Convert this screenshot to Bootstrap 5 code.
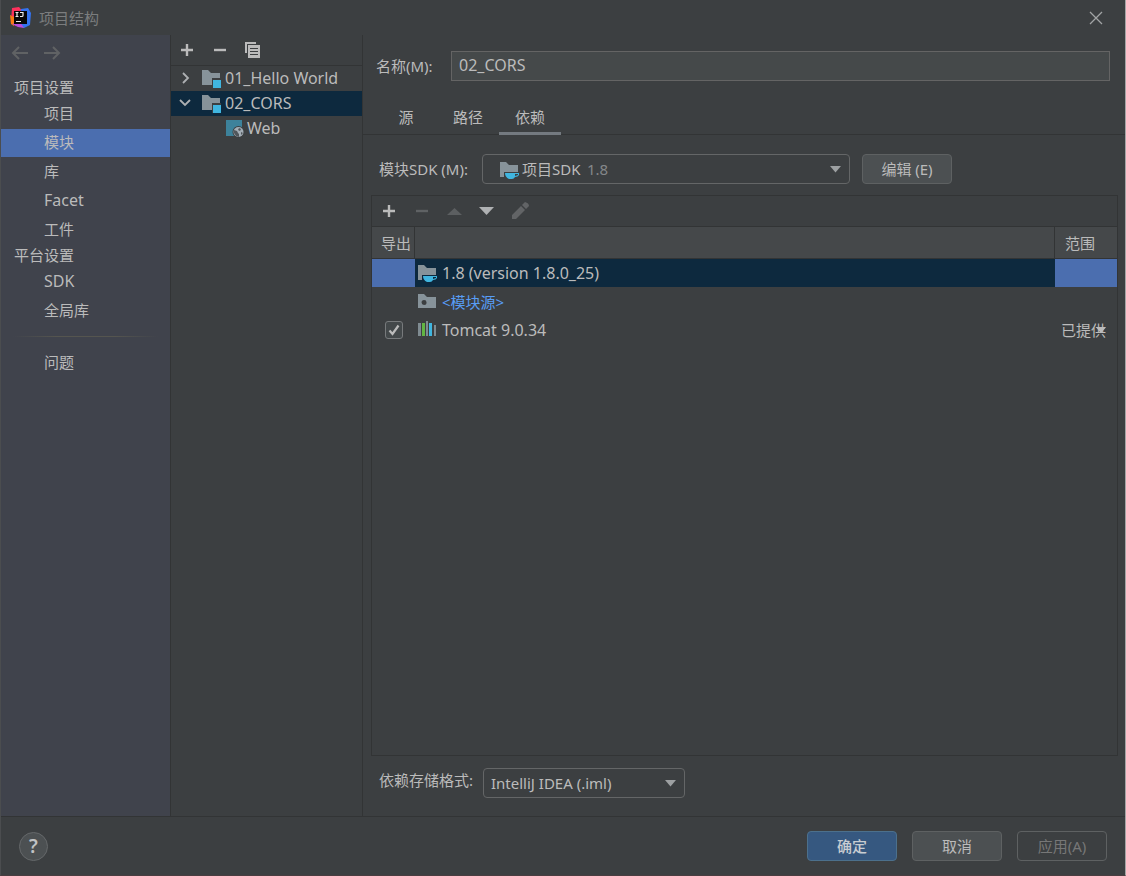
<!DOCTYPE html>
<html lang="zh-CN" data-bs-theme="dark">
<head>
<meta charset="utf-8">
<meta name="viewport" content="width=device-width, initial-scale=1">
<title>项目结构</title>
<link href="https://cdn.jsdelivr.net/npm/bootstrap@5.3.0/dist/css/bootstrap.min.css" rel="stylesheet">
<style>
:root { --bg:#3c3f41; --side:#40434c; --line:#323435; --txt:#bbbbbb; --dim:#7b7d7e; --edge:#5e6162; --sel:#0d293e; --blue:#4b6eaf; }
body { font-family:"Noto Sans","Noto Sans CJK SC",sans-serif; font-size:15px; line-height:20px; color:var(--txt); background:var(--bg); }
svg { display:block; flex:none; }
.window { border-left:1px solid #4b4d4f; border-right:1px solid #a5a5a5; border-bottom:1px solid #4a3d40; }
.titlebar { height:35px; padding:0 22px 0 9px; color:var(--dim); }
.plain { border:0; padding:0; background:none; color:inherit; }
.latin { font-size:16px; }
.sidebar { width:170px; background:var(--side); border-right:1px solid var(--line); }
.history { height:41px; padding:0 10px 5px; gap:14px; }
.side-head { height:23px; line-height:23px; padding-left:13px; margin:0; font-size:15px; font-weight:400; color:var(--txt); }
.side-link { display:block; height:28px; line-height:27px; margin-top:1px; padding-left:43px; color:var(--txt); text-decoration:none; }
.side-link.active { background:var(--blue); }
.side-rule { height:1px; margin:11px 12px 12px; background:linear-gradient(90deg,transparent,#55554f 30%,#55554f 70%,transparent); }
.tree { width:192px; border-right:1px solid var(--line); }
.tree-tools { height:31px; padding:0 7px; gap:15px; border-bottom:1px solid var(--line); }
.tree-row { height:25px; padding:0 0 2px 6px; cursor:default; white-space:nowrap; }
.tree-row.active { background:var(--sel); }
.content { min-width:0; }
.name-row { padding:16px 15px 0 13px; }
.name-label { width:75px; }
.name-input { height:30px; padding:0 7px 2px; border:1px solid #646464; border-radius:0; background:#45494a; color:var(--txt); }
.tabs { height:54px; padding-left:12px; border-bottom:1px solid var(--line); align-items:flex-end; }
.tab { width:62px; height:35px; padding:1px 0 0; margin-bottom:-1px; border:0; border-bottom:3px solid transparent; background:none; color:var(--txt); }
.tab.active { border-color:#747a80; }
.sdk-row { padding:19px 15px 11px 16px; gap:12px; }
.sdk-label { width:91px; white-space:nowrap; }
.sdk-box { flex:0 1 368px; }
.combo { height:30px; width:100%; padding:0 32px 0 7px; border:1px solid #646667; border-radius:4px; color:var(--txt); font-size:15px; background-color:var(--bg);
 background-image:url("data:image/svg+xml,%3Csvg xmlns='http://www.w3.org/2000/svg' viewBox='0 0 11 7'%3E%3Cpath fill='%239da0a2' d='M0 0h11L5.500 6.500z'/%3E%3C/svg%3E"); background-size:11px 7px; background-position:right 8px center; }
.combo.sdk { padding-left:39px; }
.sdk-icon { left:17px; top:6px; pointer-events:none; }
.sdk-version { left:105px; top:5px; color:#84878a; pointer-events:none; }
.push { width:90px; height:30px; padding:0; border:1px solid var(--edge); border-radius:4px; background:#4c5052; color:var(--txt); font-size:15px; line-height:20px; }
.push.primary { background:#365880; border-color:#4c708c; font-weight:500; color:#c8cdd2; }
.push:disabled { background:transparent; color:#777; border-color:var(--edge); opacity:1; }
.panel { margin:0 7px 0 8px; border:1px solid var(--line); }
.panel-tools { height:31px; padding:0 8px; gap:15px; border-bottom:1px solid var(--line); }
.deps { width:100%; table-layout:fixed; border-collapse:separate; border-spacing:0; }
.deps .c-export { width:43px; }
.deps .c-scope { width:62px; }
.deps th { height:32px; padding:0; font-weight:400; background:#45484a; border-bottom:1px solid var(--line); box-shadow:inset -1px 0 var(--line); vertical-align:middle; white-space:nowrap; }
.deps th:last-child { box-shadow:none; padding-left:10px; }
.deps th:first-child { padding-left:9px; }
.deps td { height:28px; padding:0; }
.deps tbody tr + tr td { padding-top:1px; }
.deps tr.active td { background:var(--blue); }
.deps tr.active td.dep { background:var(--sel); }
.dep > div { gap:5px; padding-left:2px; }
.src { color:#589df6; }
.tick { appearance:none; display:block; width:18px; height:18px; margin:0 0 0 13px; border:1px solid #777a7c; border-radius:3px; background:#43484a; }
.tick:checked { background-image:url("data:image/svg+xml,%3Csvg xmlns='http://www.w3.org/2000/svg' viewBox='0 0 16 16'%3E%3Cpath fill='none' stroke='%23bbbbbb' stroke-width='2.200' d='M3.500 8.500 6.500 12 12.500 3.500'/%3E%3C/svg%3E"); }
.scope { appearance:none; display:block; width:100%; height:28px; padding:0 0 0 6px; border:0; color:var(--txt); font-size:15px; background:url("data:image/svg+xml,%3Csvg xmlns='http://www.w3.org/2000/svg' viewBox='0 0 11 7'%3E%3Cpath fill='%23bbbbbb' d='M0 0h11L5.500 6.500z'/%3E%3C/svg%3E") no-repeat right 11px center / 10px 7px; }
.format-row { padding:12px 15px 18px 16px; }
.format-label { width:104px; height:24px; line-height:24px; }
.format-box { width:202px; }
.actions { height:59px; padding:0 18px; gap:15px; border-top:1px solid var(--line); }
.help { width:29px; height:29px; padding:0; border:1px solid #65686a; border-radius:50%; background:#4c5052; color:#c0c2c4; font-size:19px; font-weight:600; line-height:26px; }
</style>
</head>
<body>
<svg width="0" height="0" class="position-absolute" aria-hidden="true">
 <defs>
  <symbol id="plus" viewBox="0 0 18 18"><path d="M9 3v12M3 9h12" stroke="currentColor" stroke-width="2.400"/></symbol>
  <symbol id="minus" viewBox="0 0 18 18"><path d="M3 9h12" stroke="currentColor" stroke-width="2.400"/></symbol>
  <symbol id="folder" viewBox="0 0 20 20"><path d="M1 2h6l3 3h9v12H1z" fill="#87939a"/></symbol>
  <symbol id="module" viewBox="0 0 20 20"><use href="#folder"/><path d="M11 10h9v10h-9z" fill="#3c3f41"/><path d="M12 12h8v8h-8z" fill="#40b6e0"/></symbol>
  <symbol id="sdk" viewBox="0 0 20 20"><path d="M1 2h6l3 3h9v7H5v5H1z" fill="#87939a"/><path fill="#40b6e0" fill-rule="evenodd" d="M6 13h14v2q-1 2-4 2-1 2-3 2H10q-4-2-4-6zm10 1v2l3-1v-1z"/></symbol>
 </defs>
</svg>
<div class="window d-flex flex-column min-vh-100">
 <header class="titlebar d-flex align-items-center">
  <svg width="21" height="21" viewBox="0 0 21 21"><path d="M2 1 9 0l4 5-7 14-5-5z" fill="#fe315d"/><path d="M0 8l6 3-2 8-3-2z" fill="#f97a12"/><path d="M11 2l7-1 3 5-1 12-6 3-6-3z" fill="#3474f0"/><path d="M2 17l8-2 4 6-6-1z" fill="#b84bdc"/><path d="M4 4h13v13H4z" fill="#080808"/><path d="M5.500 5.500h3M7 5.500v4M5.500 9.500h3M10 5.500h3v3q0 1-1 1h-2M6 14.500h5" fill="none" stroke="#eee" stroke-width="1.200"/></svg>
  <span class="ms-2">项目结构</span>
  <button class="plain ms-auto" aria-label="关闭"><svg width="14" height="14" viewBox="0 0 14 14"><path d="M1 1l12 12M13 1 1 13" stroke="#a2a4a5" stroke-width="1.300"/></svg></button>
 </header>
 <div class="d-flex flex-grow-1">
  <nav class="sidebar flex-shrink-0" aria-label="设置">
   <div class="history d-flex align-items-center">
    <button class="plain" aria-label="后退"><svg width="18" height="16" viewBox="0 0 18 16"><path d="M17 8H2M8 2 2 8l6 6" fill="none" stroke="#606264" stroke-width="2"/></svg></button>
    <button class="plain" aria-label="前进"><svg width="18" height="16" viewBox="0 0 18 16"><path d="M1 8h15M10 2l6 6-6 6" fill="none" stroke="#606264" stroke-width="2"/></svg></button>
   </div>
   <h2 class="side-head">项目设置</h2>
   <a class="side-link" href="#">项目</a>
   <a class="side-link active" href="#" aria-current="page">模块</a>
   <a class="side-link" href="#">库</a>
   <a class="side-link latin" href="#">Facet</a>
   <a class="side-link" href="#">工件</a>
   <h2 class="side-head">平台设置</h2>
   <a class="side-link latin" href="#">SDK</a>
   <a class="side-link" href="#">全局库</a>
   <div class="side-rule"></div>
   <a class="side-link" href="#">问题</a>
  </nav>
  <section class="tree flex-shrink-0">
   <div class="tree-tools d-flex align-items-center">
    <button class="plain" aria-label="添加"><svg width="18" height="18"><use href="#plus"/></svg></button>
    <button class="plain" aria-label="移除"><svg width="18" height="18"><use href="#minus"/></svg></button>
    <button class="plain" aria-label="复制"><svg width="18" height="18" viewBox="0 0 18 18"><path d="M2 12V2h10" fill="none" stroke="currentColor" stroke-width="2"/><path fill="currentColor" fill-rule="evenodd" d="M4 4h12v13H4zm2 3v1h8V7zm0 3v1h8v-1zm0 3v1h8v-1z"/></svg></button>
   </div>
   <div class="tree-row latin d-flex align-items-center"><svg width="16" height="16" viewBox="0 0 16 16"><path d="M6 3l5 5-5 5" fill="none" stroke="#adb0b2" stroke-width="1.800"/></svg><svg class="ms-2 me-1" width="20" height="20"><use href="#module"/></svg><span>01_Hello World</span></div>
   <div class="tree-row latin active d-flex align-items-center"><svg width="16" height="16" viewBox="0 0 16 16"><path d="M3 5l5 5 5-5" fill="none" stroke="#adb0b2" stroke-width="1.800"/></svg><svg class="ms-2 me-1" width="20" height="20"><use href="#module"/></svg><span>02_CORS</span></div>
   <div class="tree-row latin d-flex align-items-center"><svg class="ms-5" width="22" height="20" viewBox="0 0 22 20"><path d="M1 2h16v16H1z" fill="#3d829b"/><circle cx="13.500" cy="14" r="6" fill="#3c3f41"/><circle cx="13.500" cy="14" r="5" fill="#a3adb5"/><path d="M9 12l3 1 1 2 1 1v3l-3-1-2-3zm5-2-1 2 2 1 1-2zm2 4 2 1-2 2z" fill="#50565b"/></svg><span>Web</span></div>
  </section>
  <main class="content d-flex flex-column flex-grow-1">
   <div class="name-row d-flex align-items-center">
    <label class="name-label flex-shrink-0" for="name">名称(M):</label>
    <input id="name" class="name-input latin flex-grow-1" type="text" value="02_CORS">
   </div>
   <div class="tabs d-flex" role="tablist">
    <button class="tab" role="tab">源</button>
    <button class="tab" role="tab">路径</button>
    <button class="tab active" role="tab" aria-selected="true">依赖</button>
   </div>
   <div class="sdk-row d-flex align-items-center">
    <label class="sdk-label flex-shrink-0" for="sdk-select">模块SDK (M):</label>
    <div class="sdk-box position-relative">
     <select id="sdk-select" class="form-select combo sdk"><option>项目SDK</option></select>
     <svg class="sdk-icon position-absolute" width="20" height="20"><use href="#sdk"/></svg>
     <span class="sdk-version position-absolute">1.8</span>
    </div>
    <button class="push flex-shrink-0">编辑 (E)</button>
   </div>
   <section class="panel flex-grow-1">
    <div class="panel-tools d-flex align-items-center">
     <button class="plain" aria-label="添加"><svg width="18" height="18"><use href="#plus"/></svg></button>
     <button class="plain" aria-label="移除"><svg width="18" height="18" color="#5f6264"><use href="#minus"/></svg></button>
     <button class="plain" aria-label="上移"><svg width="18" height="18" viewBox="0 0 18 18"><path d="M1 13h15L8.500 6z" fill="#5c5f61"/></svg></button>
     <button class="plain" aria-label="下移"><svg width="18" height="18" viewBox="0 0 18 18"><path d="M0 5h15L7.500 13z" fill="#afb1b3"/></svg></button>
     <button class="plain" aria-label="编辑"><svg width="18" height="18" viewBox="0 0 18 18"><path d="M0 17v-4L9 4l4 4L4 17zM10 3l3-3q4 1 4 4l-3 3z" fill="#626466"/></svg></button>
    </div>
    <table class="deps">
     <colgroup><col class="c-export"><col><col class="c-scope"></colgroup>
     <thead><tr><th scope="col">导出</th><th scope="col" aria-label="依赖项"></th><th scope="col">范围</th></tr></thead>
     <tbody>
      <tr class="active"><td></td><td class="dep"><div class="d-flex align-items-center"><svg width="20" height="20"><use href="#sdk"/></svg><span class="latin">1.8 (version 1.8.0_25)</span></div></td><td></td></tr>
      <tr><td></td><td class="dep"><div class="d-flex align-items-center"><svg width="20" height="20" viewBox="0 0 20 20"><path fill="#87939a" fill-rule="evenodd" d="M1 2h6l3 3h9v11H1zm6 6a2.500 2.500 0 1 0 .1 5 2.500 2.500 0 0 0-.1-5z"/></svg><span class="src">&lt;模块源&gt;</span></div></td><td></td></tr>
      <tr><td><input class="tick" type="checkbox" checked aria-label="导出 Tomcat 9.0.34"></td><td class="dep"><div class="d-flex align-items-center"><svg width="20" height="20" viewBox="0 0 20 20"><path d="M1 3h3v13H1zM9 1h2v15H9zM17 5h2v11h-2z" fill="#7f8b91"/><path d="M5 3h3v13H5z" fill="#62b543"/><path d="M12 3h3v13h-3z" fill="#40b6e0"/></svg><span class="latin">Tomcat 9.0.34</span></div></td><td><select class="scope" aria-label="范围"><option>已提供</option></select></td></tr>
     </tbody>
    </table>
   </section>
   <div class="format-row d-flex">
    <label class="format-label flex-shrink-0" for="format">依赖存储格式:</label>
    <div class="format-box"><select id="format" class="form-select combo"><option>IntelliJ IDEA (.iml)</option></select></div>
   </div>
  </main>
 </div>
 <footer class="actions d-flex align-items-center">
  <button class="help me-auto" aria-label="帮助">?</button>
  <button class="push primary">确定</button>
  <button class="push">取消</button>
  <button class="push" disabled>应用(A)</button>
 </footer>
</div>
<script src="https://cdn.jsdelivr.net/npm/bootstrap@5.3.0/dist/js/bootstrap.bundle.min.js"></script>
</body>
</html>
